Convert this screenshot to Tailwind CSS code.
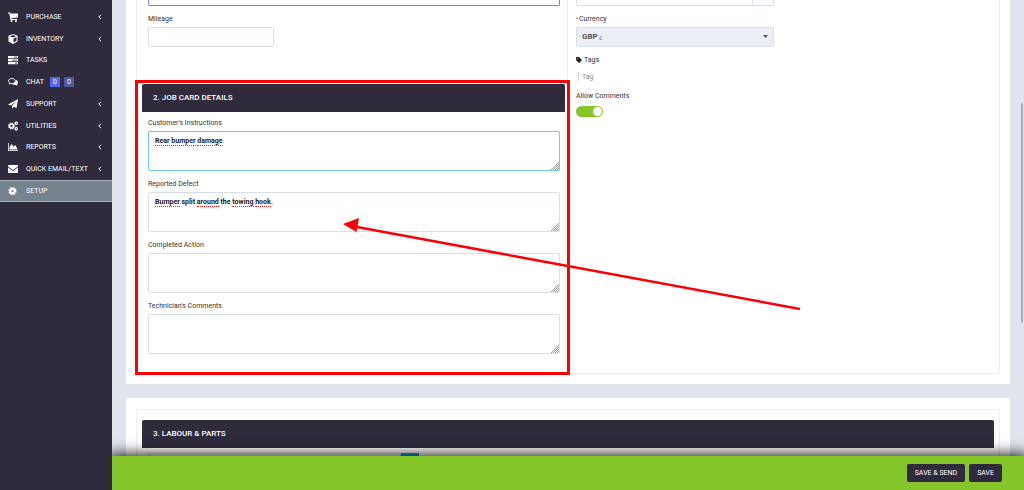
<!DOCTYPE html>
<html lang="en">
<head>
  <meta charset="UTF-8" />
  <meta name="viewport" content="width=device-width, initial-scale=1.0" />
  <title>Job Card</title>
  <script src="https://cdn.jsdelivr.net/npm/@tailwindcss/browser@4"></script>
</head>
<body class="flex h-screen overflow-hidden bg-[#e0e5ed] font-['Roboto',sans-serif] text-[7px] leading-[10px] text-[#333]">

  <!-- Sidebar -->
  <aside class="relative z-10 w-28 shrink-0 bg-[#2f2b3d] pt-[6px] text-white">
    <nav>
      <div class="grid h-[174px] grid-rows-8">
        <a href="#" class="flex items-center pl-2 pr-[9px]">
          <svg class="mr-2 h-[10px] w-[10px]" viewBox="0 0 20 20" fill="currentColor"><path d="M0 1h4l.8 2H20v8L7 12.500l.3 1.500H18v2H5L2.500 3H0z"/><circle cx="7" cy="18" r="2"/><circle cx="16" cy="18" r="2"/></svg>
          <span>PURCHASE</span>
          <svg class="ml-auto h-[6px] w-[6px]" viewBox="0 0 6 6" fill="none" stroke="currentColor"><path d="M4 .8L1.800 3 4 5.200"/></svg>
        </a>
        <a href="#" class="flex items-center pl-2 pr-[9px]">
          <svg class="mr-2 h-[10px] w-[10px]" viewBox="0 0 20 20" fill="currentColor"><path fill-rule="evenodd" d="M10 0l9 3.500v11.500L10 20l-9-5V3.500zM10 2L4 4.500 10 7l6-2.500zm1 7v8l6-3.500V6.500z"/></svg>
          <span>INVENTORY</span>
          <svg class="ml-auto h-[6px] w-[6px]" viewBox="0 0 6 6" fill="none" stroke="currentColor"><path d="M4 .8L1.800 3 4 5.200"/></svg>
        </a>
        <a href="#" class="flex items-center pl-2 pr-[9px]">
          <svg class="mr-2 h-[10px] w-[10px]" viewBox="0 0 20 20" fill="currentColor"><path fill-rule="evenodd" d="M0 2h20v4.500H0zM12 3.500v1.500h6.500V3.500zM0 8h20v4.500H0zM8 9.500V11h10.500V9.500zM0 14h20v4.500H0zM14 15.500V17h4.500v-1.500z"/></svg>
          <span>TASKS</span>
        </a>
        <a href="#" class="flex items-center pl-2 pr-[9px]">
          <svg class="mr-2 h-[10px] w-[10px]" viewBox="0 0 20 20"><path d="M15.500 6c3 .6 4.500 2.500 4.500 4.800 0 1.700-.9 3-2 3.900l1.500 2.800-4-1.700c-2.700.5-5.400-.1-7-1.800 4.500-.5 7.500-3.500 7-8z" fill="currentColor"/><path d="M8 3c4 0 6.500 2.200 6.500 5S12 13 8 13c-.8 0-1.500-.1-2.200-.3L2.500 14l.9-2.600C1.800 10.400 1 9.300 1 8c0-2.800 3-5 7-5z" fill="none" stroke="currentColor" stroke-width="1.800"/></svg>
          <span>CHAT</span>
          <span class="ml-[6px] flex gap-1">
            <span class="w-[10px] bg-[#5468ee] text-center">0</span>
            <span class="w-[10px] bg-[#4f5b9f] text-center">0</span>
          </span>
        </a>
        <a href="#" class="flex items-center pl-2 pr-[9px]">
          <svg class="mr-2 h-[10px] w-[10px]" viewBox="0 0 20 20" fill="currentColor"><path d="M20 0l-3 18-6-2.600L8 19.500V14L17 3.500 6 13 0 10.800z"/></svg>
          <span>SUPPORT</span>
          <svg class="ml-auto h-[6px] w-[6px]" viewBox="0 0 6 6" fill="none" stroke="currentColor"><path d="M4 .8L1.800 3 4 5.200"/></svg>
        </a>
        <a href="#" class="flex items-center pl-2 pr-[9px]">
          <svg class="mr-2 h-[10px] w-[10px]" viewBox="0 0 20 20" fill="none" stroke="currentColor"><circle cx="7" cy="10" r="4" stroke-width="3.400"/><circle cx="7" cy="10" r="6" stroke-width="2" stroke-dasharray="2.500 2.210"/><circle cx="16.500" cy="4.500" r="2.200" stroke-width="2.200"/><circle cx="16.500" cy="4.500" r="3.400" stroke-width="1" stroke-dasharray="1.500 1.170"/><circle cx="16.500" cy="15.500" r="2.200" stroke-width="2.200"/><circle cx="16.500" cy="15.500" r="3.400" stroke-width="1" stroke-dasharray="1.500 1.170"/></svg>
          <span>UTILITIES</span>
          <svg class="ml-auto h-[6px] w-[6px]" viewBox="0 0 6 6" fill="none" stroke="currentColor"><path d="M4 .8L1.800 3 4 5.200"/></svg>
        </a>
        <a href="#" class="flex items-center pl-2 pr-[9px]">
          <svg class="mr-2 h-[10px] w-[10px]" viewBox="0 0 20 20" fill="currentColor"><path d="M0 2h1.500v14.500H20V18H0zM3 15v-5l4-6 4.500 5L15 6l4 9z"/></svg>
          <span>REPORTS</span>
          <svg class="ml-auto h-[6px] w-[6px]" viewBox="0 0 6 6" fill="none" stroke="currentColor"><path d="M4 .8L1.800 3 4 5.200"/></svg>
        </a>
        <a href="#" class="flex items-center pl-2 pr-[9px]">
          <svg class="mr-2 h-[10px] w-[10px]" viewBox="0 0 20 20" fill="currentColor"><path d="M0 4q0-2 2-2h16q2 0 2 2v1l-10 7L0 5zM0 7l10 7 10-7v9q0 2-2 2H2q-2 0-2-2z"/></svg>
          <span>QUICK EMAIL/TEXT</span>
          <svg class="ml-auto h-[6px] w-[6px]" viewBox="0 0 6 6" fill="none" stroke="currentColor"><path d="M4 .8L1.800 3 4 5.200"/></svg>
        </a>
      </div>
      <a href="#" class="flex h-[22px] items-center border-y border-[#a9b3bb] bg-[#76838f] pl-2 pr-[9px]">
        <svg class="mr-2 h-[10px] w-[10px]" viewBox="0 0 20 20" fill="none" stroke="currentColor"><circle cx="9" cy="10" r="4.500" stroke-width="4.500"/><circle cx="9" cy="10" r="7" stroke-width="2.500" stroke-dasharray="3 2.500"/></svg>
        <span>SETUP</span>
      </a>
    </nav>
  </aside>

  <div class="relative flex min-w-0 flex-1 flex-col">
    <main class="min-h-0 flex-1 overflow-hidden px-[14px]">

      <!-- Job card -->
      <section class="relative rounded-b-xs bg-white px-[10px] pb-[10px]">
        <div class="grid grid-cols-2 rounded-b-xs border border-t-0 border-[#eceef5]">

          <div class="border-r border-[#eceef5] pb-[19px]">
            <div class="pr-[7px] pl-[11px]">
              <input type="text" aria-label="Registration" class="block h-[6px] w-full rounded-b-xs border border-t-0 border-[#7480ee]" />
              <div class="grid grid-cols-3 gap-[17px] pt-2">
                <div>
                  <label for="mileage" class="block">Mileage</label>
                  <input id="mileage" type="text" class="mt-[3px] block h-5 w-full rounded-xs border border-[#d9dfea] px-[6px]" />
                </div>
              </div>
            </div>

            <div class="relative mt-[37px]">
              <h2 class="mr-[2px] ml-[5px] rounded-t-xs bg-[#2f2b3d] px-[11px] py-[9px] text-[8px] font-medium text-white">2. JOB CARD DETAILS</h2>
              <div class="flex flex-col gap-2 pt-[6px] pr-[7px] pl-[11px]">
                <div>
                  <label for="instructions" class="block">Customer's Instructions</label>
                  <div class="relative mt-[3px]">
                    <textarea id="instructions" spellcheck="false" class="block h-10 w-full resize-none rounded-xs border border-[#70c8f0] px-[6px] py-1 font-bold text-[#222]">Rear bumper damage</textarea>
                    <div aria-hidden="true" class="squiggles pointer-events-none absolute inset-0 px-[7px] py-[5px] font-bold text-transparent"></div>
                    <svg class="absolute right-[1px] bottom-[1px] h-2 w-2" viewBox="0 0 8 8" stroke="#999"><path d="M0 8L8 0M2 8l6-6M4 8l4-4M6 8l2-2"/></svg>
                  </div>
                </div>
                <div>
                  <label for="defect" class="block">Reported Defect</label>
                  <div class="relative mt-[3px]">
                    <textarea id="defect" spellcheck="false" class="block h-10 w-full resize-none rounded-xs border border-[#d9dfea] px-[6px] py-1 font-bold text-[#222]">Bumper split around the towing hook.</textarea>
                    <div aria-hidden="true" class="squiggles pointer-events-none absolute inset-0 px-[7px] py-[5px] font-bold text-transparent"></div>
                    <svg class="absolute right-[1px] bottom-[1px] h-2 w-2" viewBox="0 0 8 8" stroke="#999"><path d="M0 8L8 0M2 8l6-6M4 8l4-4M6 8l2-2"/></svg>
                  </div>
                </div>
                <div>
                  <label for="action" class="block">Completed Action</label>
                  <div class="relative mt-[3px]">
                    <textarea id="action" class="block h-10 w-full resize-none rounded-xs border border-[#d9dfea] px-[6px] py-1 font-bold text-[#222]"></textarea>
                    <svg class="absolute right-[1px] bottom-[1px] h-2 w-2" viewBox="0 0 8 8" stroke="#999"><path d="M0 8L8 0M2 8l6-6M4 8l4-4M6 8l2-2"/></svg>
                  </div>
                </div>
                <div>
                  <label for="comments" class="block">Technician's Comments</label>
                  <div class="relative mt-[3px]">
                    <textarea id="comments" class="block h-10 w-full resize-none rounded-xs border border-[#d9dfea] px-[6px] py-1 font-bold text-[#222]"></textarea>
                    <svg class="absolute right-[1px] bottom-[1px] h-2 w-2" viewBox="0 0 8 8" stroke="#999"><path d="M0 8L8 0M2 8l6-6M4 8l4-4M6 8l2-2"/></svg>
                  </div>
                </div>
              </div>
              <!-- Highlight box and arrow -->
              <div class="pointer-events-none absolute -top-1 -right-[3px] -bottom-[21px] -left-[2px] border-3 border-[#fb0006]">
                <svg class="absolute top-[133px] left-[205px] h-[96px] w-[460px]" viewBox="0 0 460 96"><path d="M14 11L457 93" stroke="#fb0006" stroke-width="2.500"/><path d="M0 8L16 2l-2.500 14z" fill="#fb0006"/></svg>
              </div>
            </div>
          </div>

          <div class="px-2">
            <div class="grid grid-cols-2 gap-5">
              <div>
                <div class="flex h-[6px] rounded-b-xs border border-t-0 border-[#d9dfea]">
                  <input type="text" aria-label="Date" class="min-w-0 flex-1" />
                  <span class="w-[21px] border-l border-[#d9dfea] bg-[#fbfcfd]"></span>
                </div>
                <label for="currency" class="mt-2 flex"><span class="w-[3px] text-[6px] text-[#fb2020]">*</span>Currency</label>
                <div class="relative mt-[3px]">
                  <select id="currency" class="block h-5 w-full appearance-none rounded-xs border border-[#d9dfea] bg-[#eceff5] px-[5px] text-[8px] font-bold text-[#555]">
                    <option>GBP</option>
                  </select>
                  <span class="pointer-events-none absolute top-[6px] left-[23px] text-[6px] text-[#888]">£</span>
                  <svg class="pointer-events-none absolute top-2 right-[6px] h-[3px] w-[5px]" viewBox="0 0 5 3" fill="#555"><path d="M0 0h5L2.500 3z"/></svg>
                </div>
                <label for="tags" class="mt-2 flex items-center gap-[2px]">
                  <svg class="h-[6px] w-[6px]" viewBox="0 0 12 12" fill="#222"><path fill-rule="evenodd" d="M0 0h6l6 6-6 6-6-6zM2.500 1.500a1 1 0 1 0 .1 2 1 1 0 0 0-.1-2z"/></svg>
                  Tags
                </label>
                <input id="tags" type="text" placeholder="Tag" class="mt-[7px] ml-[2px] block h-[10px] w-full border-l border-dotted border-[#bbb] pl-[3px] placeholder:text-[#888]" />
                <label for="allow" class="mt-[9px] block">Allow Comments</label>
                <label class="relative mt-[5px] block h-[11px] w-[27px]">
                  <input id="allow" type="checkbox" checked class="block h-full w-full appearance-none rounded-full bg-[#84c529]" />
                  <span class="pointer-events-none absolute top-px right-px h-[9px] w-[9px] rounded-full bg-white"></span>
                </label>
              </div>
            </div>
          </div>
        </div>
      </section>

      <!-- Labour and parts -->
      <section class="mt-[14px] rounded-xs bg-white px-[10px] pt-[11px]">
        <div class="rounded-xs border border-[#eceef5] px-[5px] pt-[10px]">
          <h2 class="rounded-t-xs bg-[#2f2b3d] px-[11px] py-[9px] text-[8px] font-medium text-white">3. LABOUR &amp; PARTS</h2>
          <div class="mt-[5px] flex px-[6px]">
            <span class="h-5 w-[253px] rounded-l-xs border border-[#d9dfea]"></span>
            <button type="button" aria-label="Add item" class="h-5 w-[18px] bg-[#03a9f4]"></button>
          </div>
        </div>
      </section>
    </main>

    <footer class="relative flex h-[34px] shrink-0 items-center justify-end gap-1 bg-[#84c529] px-[22px] shadow-[0_0_12px_3px_rgba(0,0,0,0.8)]">
      <button type="button" class="h-[18px] rounded-xs bg-[#2f2b3d] px-2 text-white">SAVE &amp; SEND</button>
      <button type="button" class="h-[18px] rounded-xs bg-[#2f2b3d] px-2 text-white">SAVE</button>
    </footer>

    <div class="absolute top-[103px] right-px h-[220px] w-[2px] rounded-full bg-[#a8adb5]"></div>
  </div>

  <script>
    const skip = ['split', 'the'];
    document.querySelectorAll('.squiggles').forEach(box => {
      const words = box.previousElementSibling.value.split(' ');
      words.forEach((word, i) => {
        const el = document.createElement('span');
        el.textContent = word.replace('.', '');
        if (!skip.includes(word)) el.className = 'border-b border-dotted border-[#ff2020]';
        box.append(el, i < words.length - 1 ? ' ' : '');
      });
    });
  </script>
</body>
</html>
